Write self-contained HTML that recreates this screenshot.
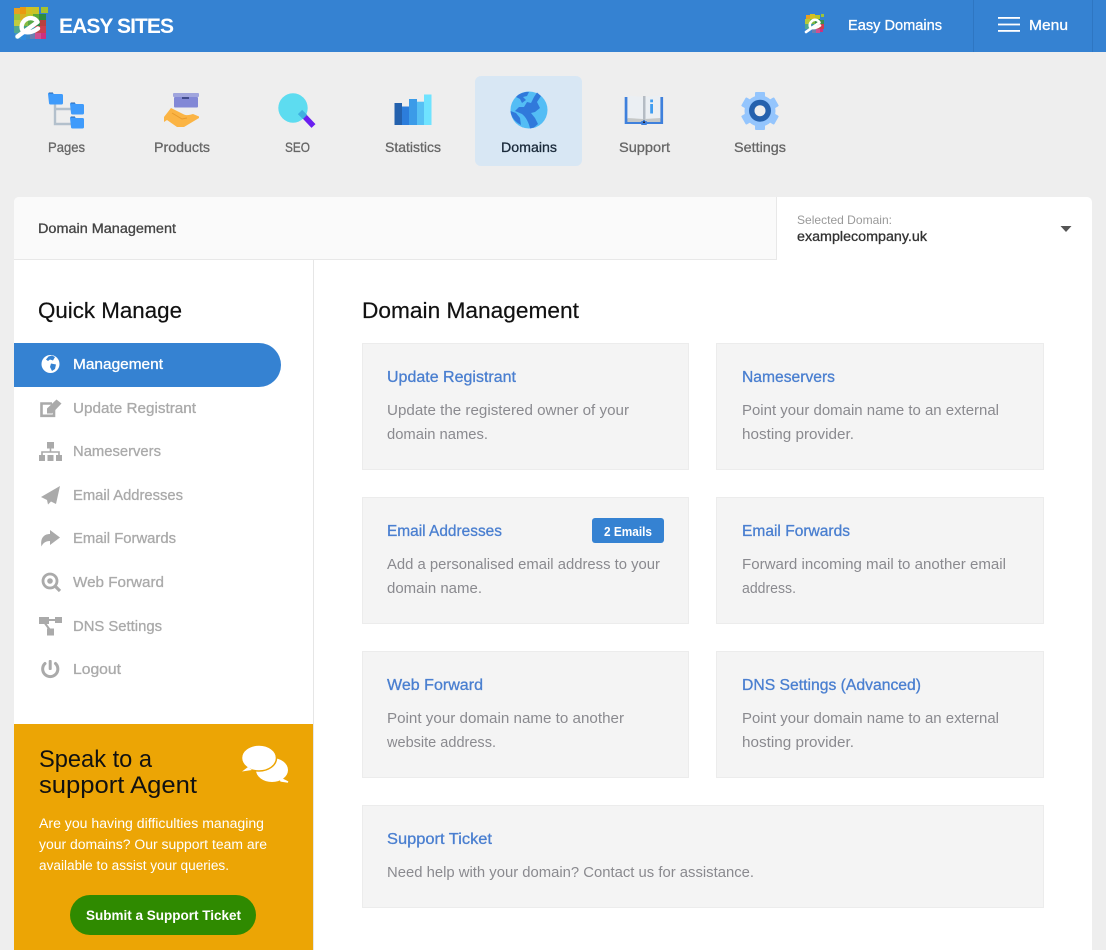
<!DOCTYPE html>
<html lang="en"><head><meta charset="utf-8"><title>Domain Management</title>
<style>
html,body{margin:0;padding:0;width:1106px;height:950px;overflow:hidden;background:#eee}
svg{position:absolute;left:0;top:0;display:block}
text{font-family:"Liberation Sans",Arial,sans-serif;white-space:pre}
.med{stroke-width:.3}
.nav{font-size:14px;fill:#666;stroke:#666}
.side{font-size:14.5px;fill:#aaa;stroke:#aaa}
.ct{font-size:15.5px;fill:#4a7fd0;stroke:#4a7fd0}
.cd{font-size:14.5px;fill:#8a8a8f}
.sup{font-size:13.5px;fill:#fff}
.head{font-size:22px;fill:#111;stroke:#111;stroke-width:.2}
</style></head><body>
<svg width="1106" height="950" viewBox="0 0 1106 950" xmlns="http://www.w3.org/2000/svg">
<rect width="1106" height="950" fill="#eee"/>
<!-- header -->
<rect width="1106" height="52" fill="#3582d2"/>
<rect x="973" y="0" width="1" height="52" fill="#2e76c2"/><rect x="1092" y="0" width="1" height="52" fill="#2e76c2"/>
<g>
<rect x="14" y="8" width="6" height="6" fill="#e8a020"/><rect x="20" y="7" width="6" height="7" fill="#e99a10"/><rect x="26" y="7" width="6" height="7" fill="#d4c020"/><rect x="32" y="7" width="7" height="7" fill="#c8c428"/><rect x="41" y="7" width="7" height="6" fill="#a6c22e"/>
<rect x="14" y="14" width="6" height="6" fill="#9cc43a"/><rect x="20" y="14" width="6" height="6" fill="#d8b020"/><rect x="26" y="14" width="7" height="6" fill="#b8c828"/><rect x="33" y="14" width="6" height="6" fill="#5aa838"/><rect x="39" y="14" width="7" height="6" fill="#2e8c40"/>
<rect x="14" y="20" width="7" height="6" fill="#c0cc40"/><rect x="21" y="20" width="7" height="6" fill="#88bb44"/><rect x="28" y="20" width="6" height="6" fill="#58a848"/><rect x="34" y="20" width="6" height="6" fill="#2f8a45"/><rect x="40" y="20" width="6" height="6" fill="#b84040"/>
<rect x="14" y="26" width="7" height="7" fill="#50a890"/><rect x="21" y="26" width="7" height="7" fill="#40a088"/><rect x="28" y="26" width="7" height="7" fill="#3a90a8"/><rect x="35" y="26" width="5" height="7" fill="#c04a50"/><rect x="40" y="26" width="6" height="7" fill="#cc3d50"/>
<rect x="15" y="33" width="6" height="6" fill="#4098c8"/><rect x="21" y="33" width="5" height="7" fill="#2e8cde"/><rect x="26" y="33" width="4" height="6" fill="#3a88c8"/><rect x="30" y="33" width="5" height="6" fill="#6a80b0"/><rect x="35" y="33" width="6" height="6" fill="#d05090"/><rect x="41" y="33" width="5" height="6" fill="#cc3080"/>
<path d="M17.500 36.500 L37.500 22 C35 17.500 29 17 25 20 C20.500 24 20.500 31 25 32 C29 33 34 31.500 38 28.500" fill="none" stroke="#fff" stroke-width="4.400" stroke-linecap="round" stroke-linejoin="round"/>
</g>
<text x="59" y="33" font-size="21" font-weight="700" fill="#fff" textLength="115" lengthAdjust="spacing">EASY SITES</text>
<g>
<rect x="806" y="15" width="4" height="4" fill="#e8a020"/><rect x="810" y="14" width="5" height="5" fill="#d4c020"/><rect x="815" y="15" width="5" height="4" fill="#b8c428"/><rect x="821" y="14" width="3" height="3" fill="#9cc43a"/>
<rect x="805" y="19" width="5" height="5" fill="#b8c83a"/><rect x="810" y="19" width="5" height="5" fill="#80b840"/><rect x="815" y="19" width="5" height="5" fill="#2f8a45"/><rect x="820" y="20" width="4" height="4" fill="#3a9050"/>
<rect x="805" y="24" width="5" height="5" fill="#50a890"/><rect x="810" y="24" width="5" height="5" fill="#3a90a8"/><rect x="815" y="24" width="5" height="5" fill="#c04a50"/><rect x="820" y="24" width="4" height="5" fill="#cc3d50"/>
<rect x="812" y="29" width="4" height="4" fill="#6a80b0"/><rect x="816" y="29" width="4" height="4" fill="#d05090"/><rect x="820" y="29" width="3" height="3" fill="#cc3080"/>
<path d="M806 32 L819.500 22.500 C818 19.500 814 19 812 21 C809 23.500 809 27.500 812 28 C815 28.500 817.500 27.500 820 25.500" fill="none" stroke="#fff" stroke-width="2.600" stroke-linecap="round" stroke-linejoin="round"/>
</g>
<text class="med" x="848" y="30" font-size="14.5" fill="#fff" stroke="#fff" textLength="94" lengthAdjust="spacingAndGlyphs">Easy Domains</text>
<rect x="998" y="17" width="22" height="1.800" fill="#fff"/><rect x="998" y="23.600" width="22" height="1.800" fill="#fff"/><rect x="998" y="30" width="22" height="1.800" fill="#fff"/>
<text class="med" x="1029" y="30" font-size="14.5" fill="#fff" stroke="#fff" textLength="39" lengthAdjust="spacingAndGlyphs">Menu</text>

<!-- nav -->
<rect x="475" y="76" width="107" height="90" rx="6" fill="#d8e7f4"/>
<g fill="none" stroke="#b3c0cc" stroke-width="2.400"><path d="M55 104 V124 H71 M55 109 H71"/></g>
<g fill="#3f9bfb">
<path d="M48 94 a1.500 1.500 0 0 1 1.500-1.500 h3 l1.500 1.500 h7.500 a1.500 1.500 0 0 1 1.500 1.500 v7.500 a1.500 1.500 0 0 1-1.500 1.500 h-11 a1.500 1.500 0 0 1-1.500-1.500 z"/>
<path d="M70 104 a1.500 1.500 0 0 1 1.500-1.500 h3 l1.500 1.500 h6.500 a1.500 1.500 0 0 1 1.500 1.500 v7.500 a1.500 1.500 0 0 1-1.500 1.500 h-10 a1.500 1.500 0 0 1-1.500-1.500 z"/>
<path d="M70 118 a1.500 1.500 0 0 1 1.500-1.500 h3 l1.500 1.500 h6.500 a1.500 1.500 0 0 1 1.500 1.500 v7.500 a1.500 1.500 0 0 1-1.500 1.500 h-10 a1.500 1.500 0 0 1-1.500-1.500 z"/>
</g>
<g fill="#2a66ad"><rect x="49" y="92.500" width="4" height="1"/><rect x="71" y="102.500" width="4" height="1"/><rect x="71" y="116.500" width="4" height="1"/></g>

<rect x="173" y="93" width="26" height="4" rx="1" fill="#a0a5dd"/><rect x="174" y="97" width="24" height="10.500" rx="1" fill="#8288d6"/><rect x="182" y="97" width="7" height="2" fill="#3f4a8c"/>
<path d="M164 117 L171 108 L183 114 C186 116 190 115 193 114 L199 116.500 V118 L184 127 H177 L167 120 L164 122 Z" fill="#fbb444"/>
<path d="M172 113 L182 119 L187 118" fill="none" stroke="#e89a2c" stroke-width="1"/>

<circle cx="293" cy="108" r="14.700" fill="#5ddcf0"/>
<path d="M304.500 116.500 L313.500 126" stroke="#6a1ff0" stroke-width="5.500"/><path d="M300 112 L305 117" stroke="#3fb0e0" stroke-width="6"/>

<rect x="394.500" y="103" width="7.500" height="22" fill="#2461ad"/><rect x="402" y="106.500" width="7" height="18.500" fill="#2c7ddb"/><rect x="409" y="99" width="8" height="26" fill="#3b9be8"/><rect x="417" y="101.700" width="7" height="23.300" fill="#56c0f4"/><rect x="424" y="94.500" width="7.500" height="30.500" fill="#6fe3ff"/>

<circle cx="529" cy="110" r="18.500" fill="#53bdf5"/>
<path d="M537 92.500 L541 96 L537 102 L540 108 L535 112 L531 113 L535 118 L538 124 L534 127.500 L530 128.500 C529 123 526 117 522 114 L515 111 L519 107 L524 107 L527 102 L531 103 L534 97 Z" fill="#3079db"/>
<path d="M518 95 C521 93 526 91.500 529 92 L527 96 L523 97 L526 100 L522 103 L520 99 L516 97 Z" fill="#3079db"/>
<path d="M510.500 111 L516 113 L520 118 L521 125 C515 122 511 117 510.500 111 Z" fill="#3079db"/>

<path d="M624.700 97 h2.700 v22 h33 v-22 h2.700 v27 h-38.400 z" fill="#3e80dc"/>
<path d="M627.500 95.500 L643 97 V119 L629 118 Z" fill="#ebeff3"/><path d="M645 97 L660 95.500 L660 118 L645 119 Z" fill="#ebeff3"/>
<rect x="643" y="96" width="2.500" height="24" fill="#b5bcc4"/>
<path d="M627.400 118 L643 119 L643 122 L627.400 122 Z M645 119 L660.400 118 L660.400 122 L645 122 Z" fill="#c5c8c8"/>
<rect x="641" y="121" width="6" height="4" rx="1" fill="#3e80dc"/><rect x="643" y="121.500" width="2" height="1.500" fill="#223"/>
<rect x="650.200" y="104" width="2.800" height="9.500" fill="#3e9cf0"/><rect x="650.200" y="99.500" width="2.800" height="2.800" fill="#3e9cf0"/>

<g fill="#94c5fd"><circle cx="760" cy="111" r="15.500"/>
<rect x="755" y="92" width="10" height="38" rx="1"/>
<rect x="755" y="92" width="10" height="38" rx="1" transform="rotate(60 760 111)"/>
<rect x="755" y="92" width="10" height="38" rx="1" transform="rotate(120 760 111)"/></g>
<circle cx="760" cy="110.700" r="11" fill="#2561ad"/><circle cx="760" cy="110.700" r="5.500" fill="#eee"/>

<g class="med">
<text class="nav" x="48" y="152" textLength="37" lengthAdjust="spacingAndGlyphs">Pages</text>
<text class="nav" x="154" y="152" textLength="56" lengthAdjust="spacingAndGlyphs">Products</text>
<text class="nav" x="285" y="152" textLength="25" lengthAdjust="spacingAndGlyphs">SEO</text>
<text class="nav" x="385" y="152" textLength="56" lengthAdjust="spacingAndGlyphs">Statistics</text>
<text class="nav" x="501" y="152" textLength="56" lengthAdjust="spacingAndGlyphs" style="fill:#1a2a3a;stroke:#1a2a3a">Domains</text>
<text class="nav" x="619" y="152" textLength="51" lengthAdjust="spacingAndGlyphs">Support</text>
<text class="nav" x="734" y="152" textLength="52" lengthAdjust="spacingAndGlyphs">Settings</text>
</g>

<!-- panel -->
<path d="M14 950 V202 a5 5 0 0 1 5-5 H1087 a5 5 0 0 1 5 5 V950 Z" fill="#fff"/>
<path d="M14 260 V202 a5 5 0 0 1 5-5 H776 V260 Z" fill="#fafafa"/>
<rect x="14" y="259" width="763" height="1" fill="#e8e8e8"/><rect x="776" y="197" width="1" height="63" fill="#e8e8e8"/>
<rect x="313" y="260" width="1" height="690" fill="#e6e6e6"/>
<text class="med" x="38" y="233" font-size="13.5" fill="#444" stroke="#444" textLength="138" lengthAdjust="spacingAndGlyphs">Domain Management</text>
<text x="797" y="224" font-size="12" fill="#999" textLength="95" lengthAdjust="spacingAndGlyphs">Selected Domain:</text>
<text class="med" x="797" y="241" font-size="13.5" fill="#333" stroke="#333" textLength="130" lengthAdjust="spacingAndGlyphs">examplecompany.uk</text>
<path d="M1060.500 226 H1071.500 L1066 232 Z" fill="#555"/>

<!-- sidebar -->
<text class="head" x="38" y="318" textLength="144" lengthAdjust="spacingAndGlyphs">Quick Manage</text>
<path d="M14 343 H259 a22 22 0 0 1 0 44 H14 Z" fill="#3582d2"/>
<circle cx="50.500" cy="364" r="9" fill="#fff"/>
<path d="M52 355.500 L55 357 L53 360.500 L50 359.500 L48 361 L46 359.500 L48.500 356.500 Z M51 363.500 L56 364.500 L55 369 L52 371 L50 367 Z" fill="#3582d2"/>
<text class="med" x="73" y="369" font-size="14.500" fill="#fff" stroke="#fff" textLength="90" lengthAdjust="spacingAndGlyphs">Management</text>

<g fill="#aaa">
<path d="M52 403.500 H41.500 V415.800 H54 V410" fill="none" stroke="#aaa" stroke-width="2.600"/>
<path d="M47 408.500 L56.500 399.500 L61.500 403.500 L52 413.500 L47 413.500 Z"/>
<path d="M47 442 h7 v6.500 h-7 z M39 455 h6 v6 h-6 z M47.500 455 h6 v6 h-6 z M56 455 h6 v6 h-6 z"/>
<path d="M50.500 448 v3.500 M42 455 v-3 h17 v3" fill="none" stroke="#aaa" stroke-width="1.600"/>
<path d="M60 486 L41 497 L47 500 L48 504.500 L51 501.500 L56 504 Z"/>
<path d="M50 530 L60 537.500 L50 545 V541 C45.500 541 43 543 41.500 546.500 C40 538 44 534 50 534 Z"/>
<circle cx="50" cy="581" r="7" fill="none" stroke="#aaa" stroke-width="2.800"/><circle cx="50" cy="581" r="2.800"/>
<path d="M55 586 L60 591" stroke="#aaa" stroke-width="3.200" fill="none"/>
<path d="M39 617 h10 v7 h-10 z M55 617 h7 v6 h-7 z M47 628.500 h7 v7 h-7 z"/>
<path d="M44 622 L50 630 M48 620 H55" stroke="#aaa" stroke-width="2" fill="none"/>
<path d="M45 663.500 a7.600 7.600 0 1 0 10.500 0" fill="none" stroke="#aaa" stroke-width="3" stroke-linecap="round"/><rect x="48.700" y="660" width="3" height="10" rx="1"/>
</g>
<g class="med">
<text class="side" x="73" y="413" textLength="123" lengthAdjust="spacingAndGlyphs">Update Registrant</text>
<text class="side" x="73" y="456" textLength="88" lengthAdjust="spacingAndGlyphs">Nameservers</text>
<text class="side" x="73" y="500" textLength="110" lengthAdjust="spacingAndGlyphs">Email Addresses</text>
<text class="side" x="73" y="543" textLength="103" lengthAdjust="spacingAndGlyphs">Email Forwards</text>
<text class="side" x="73" y="587" textLength="91" lengthAdjust="spacingAndGlyphs">Web Forward</text>
<text class="side" x="73" y="631" textLength="89" lengthAdjust="spacingAndGlyphs">DNS Settings</text>
<text class="side" x="73" y="674" textLength="48" lengthAdjust="spacingAndGlyphs">Logout</text>
</g>

<!-- support box -->
<rect x="14" y="724" width="299" height="226" fill="#eca505"/>
<text x="39" y="767" font-size="24" fill="#111" textLength="113" lengthAdjust="spacingAndGlyphs">Speak to a</text>
<text x="39" y="793" font-size="24" fill="#111" textLength="158" lengthAdjust="spacingAndGlyphs">support Agent</text>
<ellipse cx="272" cy="770" rx="16" ry="12" fill="#fff"/><path d="M280 778 L288 782 L281 781 Z" fill="#fff" stroke="#fff" stroke-width="1.500"/>
<ellipse cx="259" cy="758" rx="17.500" ry="13" fill="#fff" stroke="#eca505" stroke-width="1.500"/><path d="M248 767 L242 771.500 L252 770 Z" fill="#fff"/>
<text class="sup" x="39" y="828" textLength="225" lengthAdjust="spacingAndGlyphs">Are you having difficulties managing</text>
<text class="sup" x="39" y="849" textLength="228" lengthAdjust="spacingAndGlyphs">your domains? Our support team are</text>
<text class="sup" x="39" y="870" textLength="190" lengthAdjust="spacingAndGlyphs">available to assist your queries.</text>
<rect x="70" y="895" width="186" height="40" rx="20" fill="#2f8a00"/>
<text x="86" y="920" font-size="13.500" font-weight="700" fill="#fff" textLength="155" lengthAdjust="spacingAndGlyphs">Submit a Support Ticket</text>

<!-- main -->
<text class="head" x="362" y="318" textLength="217" lengthAdjust="spacingAndGlyphs">Domain Management</text>
<g fill="#f4f4f4" stroke="#ececec">
<rect x="362.500" y="343.500" width="326" height="126"/><rect x="716.500" y="343.500" width="327" height="126"/>
<rect x="362.500" y="497.500" width="326" height="126"/><rect x="716.500" y="497.500" width="327" height="126"/>
<rect x="362.500" y="651.500" width="326" height="126"/><rect x="716.500" y="651.500" width="327" height="126"/>
<rect x="362.500" y="805.500" width="681" height="102"/>
</g>
<g class="med">
<text class="ct" x="387" y="382" textLength="129" lengthAdjust="spacingAndGlyphs">Update Registrant</text>
<text class="ct" x="742" y="382" textLength="93" lengthAdjust="spacingAndGlyphs">Nameservers</text>
<text class="ct" x="387" y="536" textLength="115" lengthAdjust="spacingAndGlyphs">Email Addresses</text>
<text class="ct" x="742" y="536" textLength="108" lengthAdjust="spacingAndGlyphs">Email Forwards</text>
<text class="ct" x="387" y="690" textLength="96" lengthAdjust="spacingAndGlyphs">Web Forward</text>
<text class="ct" x="742" y="690" textLength="179" lengthAdjust="spacingAndGlyphs">DNS Settings (Advanced)</text>
<text class="ct" x="387" y="844" textLength="105" lengthAdjust="spacingAndGlyphs">Support Ticket</text>
</g>
<text class="cd" x="387" y="415" textLength="242" lengthAdjust="spacingAndGlyphs">Update the registered owner of your</text>
<text class="cd" x="387" y="439" textLength="101" lengthAdjust="spacingAndGlyphs">domain names.</text>
<text class="cd" x="742" y="415" textLength="257" lengthAdjust="spacingAndGlyphs">Point your domain name to an external</text>
<text class="cd" x="742" y="439" textLength="112" lengthAdjust="spacingAndGlyphs">hosting provider.</text>
<text class="cd" x="387" y="569" textLength="273" lengthAdjust="spacingAndGlyphs">Add a personalised email address to your</text>
<text class="cd" x="387" y="593" textLength="95" lengthAdjust="spacingAndGlyphs">domain name.</text>
<text class="cd" x="742" y="569" textLength="264" lengthAdjust="spacingAndGlyphs">Forward incoming mail to another email</text>
<text class="cd" x="742" y="593" textLength="54" lengthAdjust="spacingAndGlyphs">address.</text>
<text class="cd" x="387" y="723" textLength="237" lengthAdjust="spacingAndGlyphs">Point your domain name to another</text>
<text class="cd" x="387" y="747" textLength="109" lengthAdjust="spacingAndGlyphs">website address.</text>
<text class="cd" x="742" y="723" textLength="257" lengthAdjust="spacingAndGlyphs">Point your domain name to an external</text>
<text class="cd" x="742" y="747" textLength="112" lengthAdjust="spacingAndGlyphs">hosting provider.</text>
<text class="cd" x="387" y="877" textLength="367" lengthAdjust="spacingAndGlyphs">Need help with your domain? Contact us for assistance.</text>
<rect x="592" y="518" width="72" height="25" rx="3" fill="#3582d2"/>
<text x="604" y="536" font-size="12.500" font-weight="700" fill="#fff" textLength="48" lengthAdjust="spacingAndGlyphs">2 Emails</text>
</svg>
</body></html>
